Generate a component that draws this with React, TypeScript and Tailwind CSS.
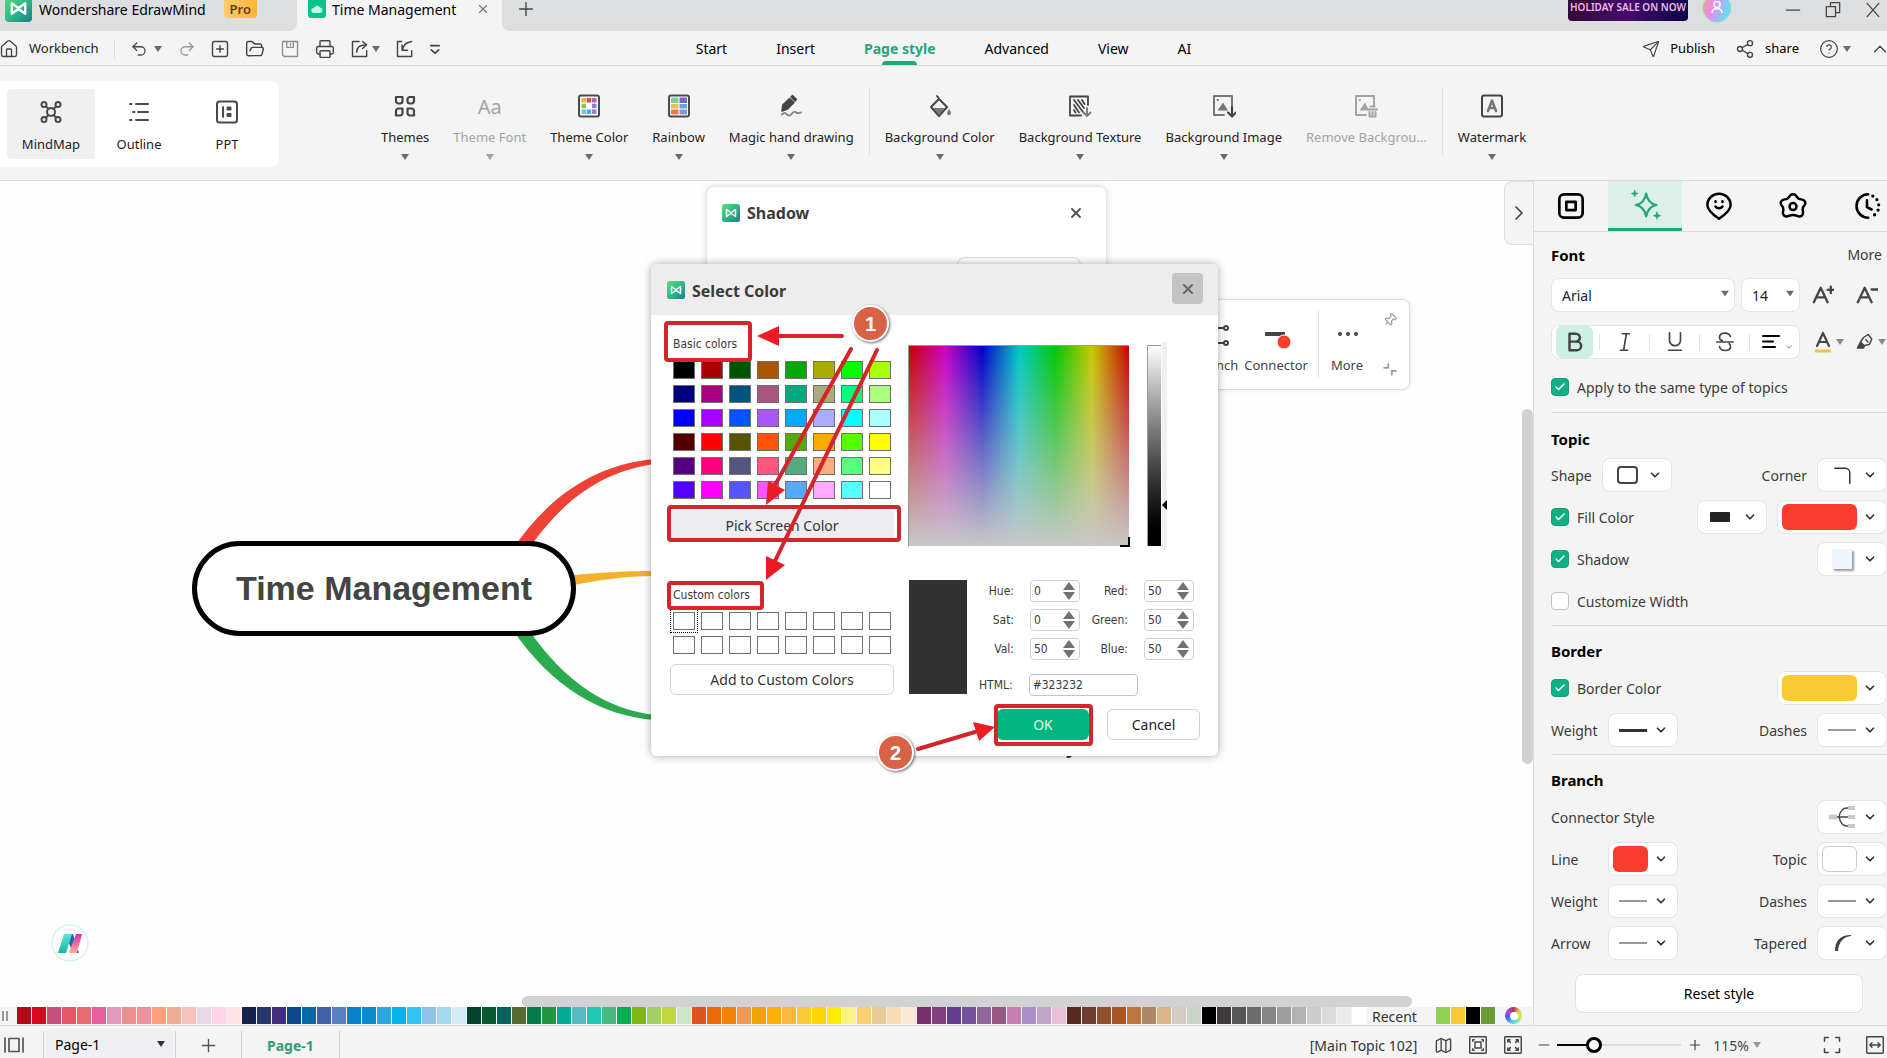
import React from "react";
import {
  House, Undo2, Redo2, SquarePlus, FolderOpen, Printer, Send, Share2, CircleHelp,
  ChevronUp, ChevronRight, ChevronDown, Plus, Minus, X, Check, Pin, Map as MapIcon,
} from "lucide-react";

type IconProps = { className?: string; box?: string; sw?: number; children: React.ReactNode };

function Icon({ className = "size-6", box = "0 0 24 24", sw = 2, children }: IconProps) {
  return (
    <svg viewBox={box} className={"shrink-0 " + className} fill="none" stroke="currentColor" strokeWidth={sw} strokeLinecap="round" strokeLinejoin="round" aria-hidden="true">
      {children}
    </svg>
  );
}

function Caret({ className = "text-[#6b6b6b]" }: { className?: string }) {
  return (
    <svg viewBox="0 0 8 6" className={"h-1.5 w-2 shrink-0 " + className} fill="currentColor" aria-hidden="true">
      <path d="M0 0h8L4 6z" />
    </svg>
  );
}

function Logo({ className }: { className: string }) {
  return (
    <svg viewBox="0 0 18 18" className={"shrink-0 " + className} aria-hidden="true">
      <defs>
        <linearGradient id="lg" x1="0" y1="0" x2="1" y2="1">
          <stop offset="0" stopColor="#5fdc7c" />
          <stop offset="0.5" stopColor="#2fb986" />
          <stop offset="1" stopColor="#1b7f8c" />
        </linearGradient>
      </defs>
      <rect width="18" height="18" rx="2.500" fill="url(#lg)" />
      <path d="M4.500 12.500v-7L8 8l1 .8L10 8l3.500-2.500v7L10 10l-1-.8-1 .8z" fill="none" stroke="#fff" strokeWidth="1.500" strokeLinejoin="round" />
    </svg>
  );
}

/* ---------- Title bar ---------- */

function TitleBar() {
  return (
    <header className="flex h-[31px] shrink-0 overflow-hidden bg-[#dcdee0] text-[15px] text-black">
      <div className="flex w-[297px] bg-[#f4f4f4]">
        <div className="flex h-[31px] w-full items-start rounded-br-lg bg-[#dcdee0] pl-[5px]">
          <Logo className="-mt-[5px] size-[27px]" />
          <span className="ml-[7px] text-[14px] leading-[19px]">Wondershare EdrawMind</span>
          <span className="ml-auto mr-10 h-[18px] rounded-b bg-gradient-to-r from-[#fccb6c] to-[#fbb533] px-1.5 text-[13px] font-semibold leading-[18px] text-[#6b3a10]">Pro</span>
        </div>
      </div>
      <div className="flex h-[31px] w-[205px] items-start bg-[#f4f4f4] pl-[11px]">
        <svg viewBox="0 0 18 18" className="h-[18px] w-[18px]" aria-hidden="true">
          <path d="M0 0h18v15a3 3 0 0 1-3 3H3a3 3 0 0 1-3-3z" fill="#08c389" />
          <path d="M6 13a2.500 2.500 0 0 1-.3-5A3.500 3.500 0 0 1 12 7.500 2.800 2.800 0 0 1 12.500 13z" fill="#c7f5e5" />
        </svg>
        <span className="ml-1.5 text-[14px] leading-[19px]">Time Management</span>
        <button aria-label="Close tab" className="ml-auto mr-3 mt-0.5 text-[#777]"><X className="size-3.5" strokeWidth={2} /></button>
      </div>
      <div className="flex flex-1 bg-[#f4f4f4]">
        <div className="flex flex-1 items-start rounded-bl-lg bg-[#dcdee0] pl-[13px]">
          <button aria-label="New tab" className="-mt-0.5 text-[#444]"><Plus className="size-[22px]" strokeWidth={1.5} /></button>
          <div className="ml-auto flex items-start">
            <div className="h-[21px] w-[120px] rounded-b bg-gradient-to-r from-[#330838] via-[#440a6c] to-[#0a0348] text-center text-[10px] font-semibold leading-[15px] text-[#f2b8e4]">HOLIDAY SALE ON NOW</div>
            <svg viewBox="0 0 30 30" className="-mt-[7px] ml-3.5 size-[30px]" aria-hidden="true">
              <defs>
                <linearGradient id="av" x1="0" y1="0" x2="1" y2="0.3">
                  <stop offset="0" stopColor="#f6a77c" /><stop offset="0.45" stopColor="#e78bf2" /><stop offset="1" stopColor="#63e0f4" />
                </linearGradient>
              </defs>
              <circle cx="15" cy="15" r="14" fill="url(#av)" stroke="#8fdcc0" />
              <circle cx="15" cy="11.500" r="3" fill="none" stroke="#fff" strokeWidth="1.500" />
              <path d="M10 20c0-6 10-6 10 0" fill="none" stroke="#fff" strokeWidth="1.500" />
            </svg>
            <div className="ml-[51px] mr-1 flex gap-5 text-[#444]">
              <button aria-label="Minimize"><Icon className="size-5" sw={1.500}><path d="M4 12h16" /></Icon></button>
              <button aria-label="Restore"><Icon className="size-5" sw={1.500}><path d="M4 8h11v12H4zM9 8V3h11v12h-5" /></Icon></button>
              <button aria-label="Close"><Icon className="size-5" sw={1.500}><path d="M5 4l14 16M19 4L5 20" /></Icon></button>
            </div>
          </div>
        </div>
      </div>
    </header>
  );
}

/* ---------- Quick access bar ---------- */

const MENU = ["Start", "Insert", "Page style", "Advanced", "View", "AI"];

function MenuBar() {
  return (
    <div className="flex h-[35px] shrink-0 items-stretch border-b border-[#dadbdc] text-[13px] text-[#222]">
      <div className="flex flex-1 items-center pt-px text-[#444]">
        <button className="-ml-px flex items-center gap-2.5 text-[#222]"><House className="size-5 text-[#444]" strokeWidth={1.6} />Workbench</button>
        <span className="ml-[15px] mr-[15px] h-5 w-px bg-[#ddd]" />
        <button aria-label="Undo" className="flex items-center gap-1.5"><Undo2 className="size-[18px]" strokeWidth={1.700} /><Caret /></button>
        <button aria-label="Redo" className="ml-4 text-[#999]"><Redo2 className="size-[18px]" strokeWidth={1.700} /></button>
        <button aria-label="New" className="ml-3.5"><SquarePlus className="size-5" strokeWidth={1.700} /></button>
        <button aria-label="Open" className="ml-[15px]"><FolderOpen className="size-5" strokeWidth={1.700} /></button>
        <button aria-label="Save" className="ml-[15px] text-[#8d8d8d]">
          <Icon className="size-5" sw={1.600}><path d="M3 3h18v18H5l-2-2zM8 3v7h8V3M12.500 5.500v2" /></Icon>
        </button>
        <button aria-label="Print" className="ml-[15px]"><Printer className="size-5" strokeWidth={1.700} /></button>
        <button aria-label="Export" className="ml-[15px] flex items-center gap-0.5">
          <Icon className="size-5" sw={1.700}><path d="M11 3H3v18h17v-7M8 16c0-6 3-9 11-9M15 3l5 4-5 4.500" /></Icon><Caret />
        </button>
        <button aria-label="Import" className="ml-[15px]">
          <Icon className="size-5" sw={1.700}><path d="M8 3H3v18h17v-7M20 3c-7 1-10 4-11 10M8.500 7v6.500H15" /></Icon>
        </button>
        <button aria-label="Customize" className="ml-2.5"><Icon className="size-5"><path d="M7 8h10M7.500 13l4.500 4 4.500-4" /></Icon></button>
      </div>
      <nav className="flex items-stretch gap-[49px] text-[14px] leading-[36px] text-black">
        {MENU.map((m) =>
          m === "Page style" ? (
            <a key={m} href="#page-style" className="flex flex-col items-center font-bold text-[#22a67c]">
              <span className="h-[30px]">{m}</span>
              <span className="h-1 w-[35px] rounded-t bg-[#22a67c]" />
            </a>
          ) : (
            <a key={m} href={"#" + m}>{m}</a>
          )
        )}
      </nav>
      <div className="flex flex-1 items-center justify-end overflow-hidden pt-px text-black">
        <button className="flex items-center gap-2.5"><Send className="size-[18px] text-[#444]" strokeWidth={1.5} />Publish</button>
        <button className="ml-5 flex items-center gap-2.5"><Share2 className="size-5 text-[#444]" strokeWidth={1.6} />share</button>
        <button aria-label="Help" className="ml-5 flex items-center gap-1 text-[#444]"><CircleHelp className="size-5" strokeWidth={1.4} /><Caret /></button>
        <button aria-label="Collapse ribbon" className="-mr-1 ml-[18px] text-[#444]"><ChevronUp className="size-[22px]" strokeWidth={1.5} /></button>
      </div>
    </div>
  );
}

/* ---------- Ribbon ---------- */

const IMG_FRAME = "M20 12V2H2v19h10M5.500 6h.5";

const icons = {
  mindmap: (
    <Icon sw={2}><circle cx="12" cy="12" r="4" /><circle cx="5" cy="4.500" r="2.500" /><circle cx="19" cy="4.500" r="2.500" /><circle cx="5" cy="19.500" r="2.500" /><circle cx="19" cy="19.500" r="2.500" /><path d="M7 6.500l2.500 2.500M17 6.500l-2.500 2.500M7 17.500l2.500-2.500M17 17.500l-2.500-2.500" /></Icon>
  ),
  outline: <Icon sw={2}><path d="M3 4h1.500M9 4h12M6 12h1.500M11 12h10M3 20h1.500M9 20h12" /></Icon>,
  ppt: <Icon sw={2}><rect x="2" y="1.500" width="20" height="21" rx="2.500" /><path d="M8 7v10M12.500 7.500h3v2h-3zM12.500 14h3v2h-3z" /></Icon>,
  themes: (
    <Icon sw={2.200}><path d="M3 3h6.500v4A2.500 2.500 0 0 1 7 9.500H5.500A2.500 2.500 0 0 1 3 7zM14.500 5.500A2.500 2.500 0 0 1 17 3h4v4a2.500 2.500 0 0 1-2.500 2.500H17A2.500 2.500 0 0 1 14.500 7zM3 17a2.500 2.500 0 0 1 2.500-2.500h4V19A2.500 2.500 0 0 1 7 21.500H3zM14.500 14.500h4A2.500 2.500 0 0 1 21 17v4.500h-4a2.500 2.500 0 0 1-2.500-2.500z" /></Icon>
  ),
  themeColor: (
    <svg viewBox="0 0 24 24" className="size-6"><rect x="2" y="1.500" width="20" height="21" rx="2" fill="#fff" stroke="#4a4a4a" strokeWidth="2" />
      <path d="M4.500 4h4.500v4.500H4.500z" fill="#e2b84a" /><path d="M9.700 4h4.500v4.500H9.700z" fill="#d4504c" /><path d="M15 4h4.500v4.500H15z" fill="#b964b8" />
      <path d="M4.500 9.700h4.500v4.500H4.500z" fill="#86c45c" /><path d="M15 9.700h4.500v4.500H15z" fill="#8c7fd4" />
      <path d="M4.500 15.400h4.500v4.500H4.500z" fill="#6ec6d0" /><path d="M9.700 15.400h4.500v4.500H9.700z" fill="#5ba8e0" /><path d="M15 15.400h4.500v4.500H15z" fill="#8a86cc" />
    </svg>
  ),
  rainbow: (
    <svg viewBox="0 0 24 24" className="size-6"><rect x="2" y="1.500" width="20" height="21" rx="2" fill="#fff" stroke="#4a4a4a" strokeWidth="2" />
      <path d="M4 3.500h7.500V9H4z" fill="#7ccf9c" /><path d="M12.500 3.500H20V9h-7.500z" fill="#7f62c4" />
      <path d="M4 10h7.500v4.500H4z" fill="#e9c050" /><path d="M12.500 10H20v4.500h-7.500z" fill="#66a9d8" />
      <path d="M4 15.500h7.500v5H4z" fill="#ea7a50" /><path d="M12.500 15.500H20v5h-7.500z" fill="#8a96da" />
    </svg>
  ),
  magic: (
    <Icon sw={1.500}>
      <path d="M3 17l.8-6L10.500 4.500l4.500 4L8.500 15z" fill="currentColor" /><path d="M12 3l1.500-1.500 4 4L16 7z" fill="currentColor" />
      <path d="M3 20.500c2-2 3.500-2 5 0s3.500 1 5-1 3-2 4-1 2 .5 5 0" stroke="#888" strokeWidth="2" />
    </Icon>
  ),
  bucket: (
    <Icon><path d="M11 5l8 8-8 9-8-9zM9 2l3 4" /><path d="M5 14h12l-6 7z" fill="#777" stroke="none" /><path d="M21 15c3 4 2 6 0 6s-3-2 0-6z" fill="#777" stroke="none" /></Icon>
  ),
  texture: (
    <Icon sw={1.800}><path d="M20 11V2.500H2v19h11" /><path d="M6 6l9 12M10 6l6 8M14 6l2.500 4M6 11l5 7.500M6 16l1.500 2.500" /><path d="M19 14v8M15.500 18.500L19 22l3.500-3.500" stroke="#777" /></Icon>
  ),
  image: (
    <Icon><path d={IMG_FRAME} stroke="#777" /><path d="M5.500 16.500l5.500-8 5 8z" fill="#777" stroke="none" /><path d="M20 13v9M16 18.500l4 4 4-4" strokeWidth="2.200" /></Icon>
  ),
  remove: (
    <Icon><path d={IMG_FRAME} /><path d="M5.500 16.500l5.500-8 4 8z" fill="currentColor" stroke="none" /><path d="M14 15.500h9M16.500 12.500h4M15.500 18v4.500h6V18M18.500 18v4" /></Icon>
  ),
  watermark: <Icon><rect x="2" y="1.500" width="20" height="21" rx="2" /><path d="M8 17l4-10.500L16 17M9.500 14h5" stroke="#777" strokeWidth="2.500" /></Icon>,
};

type Tool = { label: string; icon: React.ReactNode; off?: boolean; caret?: boolean; sep?: boolean };

const TOOLS: Tool[] = [
  { label: "Themes", icon: icons.themes, caret: true },
  { label: "Theme Font", icon: <span className="block h-6 text-[20px] leading-[26px]">Aa</span>, off: true, caret: true },
  { label: "Theme Color", icon: icons.themeColor, caret: true },
  { label: "Rainbow", icon: icons.rainbow, caret: true },
  { label: "Magic hand drawing", icon: icons.magic, caret: true, sep: true },
  { label: "Background Color", icon: icons.bucket, caret: true },
  { label: "Background Texture", icon: icons.texture, caret: true },
  { label: "Background Image", icon: icons.image, caret: true },
  { label: "Remove Backgrou...", icon: icons.remove, off: true, sep: true },
  { label: "Watermark", icon: icons.watermark, caret: true },
];

function Ribbon() {
  const views = [
    { label: "MindMap", icon: icons.mindmap },
    { label: "Outline", icon: icons.outline },
    { label: "PPT", icon: icons.ppt },
  ];
  return (
    <div className="flex h-[115px] shrink-0 items-start border-b border-[#dadbdc] pt-[15px] text-[13px] text-[#222]">
      <div className="flex w-[279px] shrink-0 rounded-r-lg bg-white py-2 pl-[7px]">
        {views.map((v, i) => (
          <button key={v.label} className={"flex h-[70px] w-[88px] flex-col items-center rounded pt-[11px] " + (i === 0 ? "bg-[#f0f0f0]" : "")}>
            <span className="text-[#4a4a4a]">{v.icon}</span>
            <span className="mt-2.5 leading-5">{v.label}</span>
          </button>
        ))}
      </div>
      <div className="ml-[90px] flex">
        {TOOLS.map((t) => (
          <React.Fragment key={t.label}>
            <button disabled={t.off} className={"flex h-20 flex-col items-center whitespace-nowrap px-3 pt-[13px] " + (t.off ? "text-[#a3a3a3]" : "")}>
              <span className={t.off ? "" : "text-[#444]"}>{t.icon}</span>
              <span className="mt-[9px] leading-5">{t.label}</span>
              {t.caret && <span className="mt-[7px]"><Caret className={t.off ? "text-[#a3a3a3]" : "text-[#6b6b6b]"} /></span>}
            </button>
            {t.sep && <span className="mx-[3px] mt-2 h-[66px] w-px bg-[#dedede]" />}
          </React.Fragment>
        ))}
      </div>
    </div>
  );
}

/* ---------- Colour dialog ---------- */

const BASIC = [
  "#000000", "#aa0000", "#005500", "#aa5500", "#00aa00", "#aaaa00", "#00ff00", "#aaff00",
  "#00007f", "#aa007f", "#00557f", "#aa557f", "#00aa7f", "#aaaa7f", "#00ff7f", "#aaff7f",
  "#0000ff", "#aa00ff", "#0055ff", "#aa55ff", "#00aaff", "#aaaaff", "#00ffff", "#aaffff",
  "#550000", "#ff0000", "#555500", "#ff5500", "#55aa00", "#ffaa00", "#55ff00", "#ffff00",
  "#55007f", "#ff007f", "#55557f", "#ff557f", "#55aa7f", "#ffaa7f", "#55ff7f", "#ffff7f",
  "#5500ff", "#ff00ff", "#5555ff", "#ff55ff", "#55aaff", "#ffaaff", "#55ffff", "#ffffff",
];

function Spin({ label, value }: { label: string; value: number }) {
  return (
    <label className="flex h-[22px] items-center justify-end gap-4">
      {label}:
      <span className="flex h-[22px] w-[50px] items-center rounded border border-[#d0d0d0] bg-white pl-[3px] pr-1">
        <input type="number" defaultValue={value} className="w-0 min-w-0 flex-1 bg-transparent outline-none [appearance:textfield] [&::-webkit-inner-spin-button]:appearance-none" />
        <svg viewBox="0 0 12 18" className="h-[18px] w-3" fill="#717171" aria-hidden="true"><path d="M6 0l6 8H0zM6 18l6-8H0z" /></svg>
      </span>
    </label>
  );
}

function SelectColorDialog() {
  return (
    <section aria-label="Select Color" className="absolute left-[651px] top-[83px] w-[567px] overflow-hidden rounded-md bg-white text-[#3a3a3a] shadow-[0_0_8px_rgba(0,0,0,0.35)]">
      <div className="flex h-[51px] items-center bg-[#ededed] pl-4 pr-[15px]">
        <Logo className="size-[18px]" />
        <h2 className="ml-[7px] pt-0.5 text-[16px] font-bold">Select Color</h2>
        <button aria-label="Close" className="mb-[11px] ml-auto grid h-[31px] w-[31px] place-items-center self-end rounded-sm bg-[#c4c4c4] text-[#666]"><X className="size-4" strokeWidth={3} /></button>
      </div>
      <div className="flex gap-3.5 pl-[19px]">
        <div className="w-[224px] pt-[19px]">
          <h3 className="px-[3px] font-['DejaVu_Sans_Condensed','DejaVu_Sans',sans-serif] text-[12px] leading-5">Basic colors</h3>
          <div className="mt-[7px] grid grid-cols-[repeat(8,22px)] gap-1.5 px-[3px]">
            {BASIC.map((c) => (
              <button key={c} aria-label={c} className="h-[18px] border border-[#707070]" style={{ backgroundColor: c }} />
            ))}
          </div>
          <button className="mt-[11px] h-[31px] w-full rounded bg-[#edecf1] text-[14px] text-[#333]">Pick Screen Color</button>
          <h3 className="mt-11 px-[3px] font-['DejaVu_Sans_Condensed','DejaVu_Sans',sans-serif] text-[12px] leading-5">Custom colors</h3>
          <div className="mt-[7px] grid grid-cols-[repeat(8,22px)] gap-1.5 px-[3px]">
            {Array.from({ length: 16 }, (_, i) => (
              <button key={i} aria-label={"Custom color " + (i + 1)} className={"h-[18px] border border-[#707070] bg-white " + (i === 0 ? "outline-1 outline-offset-2 outline-dotted outline-black" : "")} />
            ))}
          </div>
          <button className="mt-2.5 h-[31px] w-full rounded-md border border-[#d4d4d4] bg-white text-[14px] text-[#333]">Add to Custom Colors</button>
        </div>
        <div className="pt-[30px]">
          <div className="flex">
            <div className="relative h-[201px] w-[221px] border-l border-t border-[#999] bg-[linear-gradient(to_bottom,rgba(200,200,200,0),#c8c8c8),linear-gradient(to_right,#c80000,#c800c8,#0000c8,#00c8c8,#00c800,#c8c800,#c80000)]">
              <span className="absolute -bottom-px -right-px h-2.5 w-2.5 border-b-2 border-r-2 border-black" />
            </div>
            <div className="ml-[18px] h-[201px] w-3.5 border-l border-t border-[#999] bg-gradient-to-b from-white to-black" />
            <div className="-mb-1 -mt-[3px] ml-px flex w-[5px] items-start bg-[#f0f0f0]">
              <svg viewBox="0 0 5 10" className="mt-[158px] h-2.5 w-[5px]" aria-hidden="true"><path d="M5 0v10L0 5z" /></svg>
            </div>
          </div>
          <div className="mt-[34px] flex font-['DejaVu_Sans_Condensed','DejaVu_Sans',sans-serif] text-[12px]">
            <div className="ml-px h-[114px] w-[58px] bg-[#323232]" />
            <div className="w-[227px]">
              <div className="grid grid-cols-[113px_114px] gap-y-[7px]">
                <Spin label="Hue" value={0} /><Spin label="Red" value={50} />
                <Spin label="Sat" value={0} /><Spin label="Green" value={50} />
                <Spin label="Val" value={50} /><Spin label="Blue" value={50} />
              </div>
              <label className="mt-3.5 flex items-center gap-4 pl-3">
                HTML:
                <input defaultValue="#323232" className="h-[22px] w-[109px] rounded border border-[#c4c4c4] bg-white px-[3px] outline-none" />
              </label>
            </div>
          </div>
          <div className="mb-4 mt-[13px] flex justify-end gap-[18px] text-[14px]">
            <button className="h-[31px] w-[92px] rounded-md bg-[#02b67f] text-[#d8fbef]">OK</button>
            <button className="-mr-1.5 h-[31px] w-[93px] rounded-md border border-[#d0d0d0] bg-white text-[#222]">Cancel</button>
          </div>
        </div>
      </div>
    </section>
  );
}

/* ---------- Canvas ---------- */

function Canvas() {
  return (
    <main className="relative min-h-0 flex-1 overflow-hidden bg-[#fefefe]">
      <svg className="absolute left-0 top-0 h-full w-full" aria-hidden="true">
        <path d="M512 369C552 310 600 283 655 278L655 283C606 290 566 314 528 369z" fill="#ee4236" />
        <path d="M573 394C600 392 620 390 655 390L655 395C625 395 600 399 573 404z" fill="#f2b02c" />
        <path d="M512 448C552 506 600 535 655 539L655 534C606 528 566 502 528 448z" fill="#2bab4d" />
      </svg>
      <div className="absolute left-[192px] top-[360px] flex h-[95px] w-[384px] items-center justify-center rounded-full border-[5px] border-black bg-white font-['Liberation_Sans',Arial,sans-serif] text-[34px] font-bold text-[#444]">
        Time Management
      </div>
      <svg viewBox="0 0 38 38" className="absolute left-[51px] top-[743px] size-[38px]" aria-hidden="true">
        <defs>
          <linearGradient id="n1" x1="0" y1="0" x2="0" y2="1"><stop offset="0" stopColor="#5fe3dc" /><stop offset="1" stopColor="#17b89f" /></linearGradient>
          <linearGradient id="n2" x1="0" y1="0" x2="0" y2="1"><stop offset="0" stopColor="#e42bb0" /><stop offset="1" stopColor="#fbb08f" /></linearGradient>
        </defs>
        <circle cx="19" cy="19" r="18" fill="#fff" stroke="#d9f1ea" strokeWidth="1.500" />
        <path d="M19 10h3l6 19h-6l-5-12z" fill="#1d6fb0" />
        <path d="M13 10h8l-6 19H7z" fill="url(#n1)" />
        <path d="M25 10h6l-5 19h-8z" fill="url(#n2)" />
      </svg>
      <span className="absolute left-[1066px] top-[554px] text-[18px] font-bold leading-6 text-[#333]">y</span>

      <section aria-label="Shadow" className="absolute left-[706px] top-[5px] h-[200px] w-[401px] overflow-hidden rounded-lg border border-[#e6e6e6] bg-white shadow-[0_0_6px_rgba(0,0,0,0.15)]">
        <div className="flex items-center pl-[15px] pr-[22px] pt-4">
          <Logo className="size-[18px]" />
          <h2 className="ml-[7px] text-[16px] font-bold leading-5 text-[#3a3a3a]">Shadow</h2>
          <button aria-label="Close" className="ml-auto text-[#555]"><X className="size-4" strokeWidth={3} /></button>
        </div>
        <div className="ml-[250px] mt-[34px] h-8 w-[124px] rounded-lg border border-[#ddd]" />
      </section>

      <div className="absolute left-[1000px] top-[118px] flex h-[91px] w-[410px] justify-end rounded-lg border border-[#dedede] bg-white text-[13px] text-[#444] shadow-[0_0_4px_rgba(0,0,0,0.1)]">
        <button className="flex flex-col items-center pt-[19px]">
          <Icon className="size-8" box="0 0 32 32"><path d="M4 16h6M10 9h13M10 24h13M10 9v15" /><circle cx="25" cy="9" r="2" /><circle cx="25" cy="24" r="2" /></Icon>
          <span className="mt-1 leading-5">Branch</span>
        </button>
        <button className="ml-1.5 flex flex-col items-center pt-[19px]">
          <svg viewBox="0 0 32 32" className="size-8" aria-hidden="true"><path d="M5 13h20v4H5z" fill="#444" /><circle cx="24" cy="23" r="7" fill="#f8402f" stroke="#fff" /></svg>
          <span className="mt-1 leading-5">Connector</span>
        </button>
        <span className="ml-2.5 mr-3 mt-[11px] h-[66px] w-px bg-[#ddd]" />
        <button className="flex flex-col items-center pt-[19px]">
          <svg viewBox="0 0 32 32" className="size-8" fill="#444" aria-hidden="true"><circle cx="9" cy="15" r="2" /><circle cx="17" cy="15" r="2" /><circle cx="25" cy="15" r="2" /></svg>
          <span className="mt-1 leading-5">More</span>
        </button>
        <div className="ml-5 mr-3 flex flex-col justify-between py-[13px] text-[#999]">
          <button aria-label="Pin toolbar"><Pin className="size-3.5 rotate-45" strokeWidth={2} /></button>
          <button aria-label="Collapse toolbar"><Icon className="size-3.5" sw={3}><path d="M2 10h7V3M15 22v-7h7" /></Icon></button>
        </div>
      </div>

      <SelectColorDialog />

      <div className="absolute right-0 top-0 flex h-16 w-[29px] items-center justify-center rounded-l-lg border border-r-0 border-[#ddd] bg-[#f4f4f4] text-[#444]">
        <button aria-label="Collapse panel"><ChevronRight className="size-6" strokeWidth={1.7} /></button>
      </div>
      <div className="absolute right-0 top-[228px] h-[355px] w-[11px] rounded-md bg-[#d2d2d4]" />
      <div className="absolute bottom-0 left-[522px] right-[121px] h-[11px] rounded-md bg-[#d2d2d4]" />

      <Annotations />
    </main>
  );
}

function Step({ n, className }: { n: number; className: string }) {
  return (
    <span className={"absolute grid size-[37px] place-items-center rounded-full border-2 border-white bg-[#d86245] font-['Liberation_Sans',Arial,sans-serif] text-[20px] font-bold text-white shadow-[1px_1px_3px_rgba(0,0,0,0.6)] " + className}>
      {n}
    </span>
  );
}

function Annotations() {
  return (
    <div className="pointer-events-none absolute inset-0">
      <div className="absolute left-[664px] top-[140px] h-[41px] w-[88px] rounded-sm border-4 border-[#d4252b]" />
      <div className="absolute left-[667px] top-[324px] h-[37px] w-[234px] rounded-sm border-4 border-[#d4252b]" />
      <div className="absolute left-[667px] top-[400px] h-[29px] w-[97px] rounded-sm border-4 border-[#d4252b]" />
      <div className="absolute left-[994px] top-[523px] h-[42px] w-[99px] rounded-sm border-4 border-[#d4252b]" />
      <svg className="absolute left-0 top-0 h-full w-full" aria-hidden="true">
        <g stroke="#d4252b" strokeWidth="4" strokeLinecap="round">
          <path d="M842 155H775M851 168L775 304M877 169L774 382M918 568L975 551" />
        </g>
        <g fill="#ea1d25">
          <path d="M757 155L779 145V165zM766 324L768 300L785 309zM766 399L766 375L785 384zM995 546L973 541L979 560z" />
        </g>
      </svg>
      <Step n={1} className="left-[852px] top-[124px]" />
      <Step n={2} className="left-[877px] top-[553px]" />
    </div>
  );
}

/* ---------- Colour strip ---------- */

const STRIP = (
  "b00b17 d60a1e c8507c e85468 e96c70 e660a0 e09abc ed8f8c ee939b ff9f7c f0ac94 f6c0bc ead6e8 ffd4e4 ffe2e6 " +
  "12224c 26386e 42307a 0b488c 0668a4 4460a8 5682c0 0880cc 0a8ccc 2ea6e0 06b2ee 34c4f4 90c2ea a4d8ee d2ecf8 " +
  "05422e 065a30 04645c 566c30 087c48 209840 06ac98 54bcc0 1ccab2 48b880 06ae54 7eb810 a4d068 bed83e cee6c8 " +
  "de5420 ea6a06 f08206 f09a56 f0a404 ffae0a ffb83c f8ca34 ffd604 ffec06 fcf086 fad070 e8ca98 fadab0 fce8d0 " +
  "76306c 823e80 663e90 74529a 94669e 985884 c87cb0 a890cc c2a4c8 e8c0d8 " +
  "582a1e 723a2c 94502e aa5628 be783e b08464 dcb488 d2ccc4 c8d2c8 " +
  "000000 403a3c 585656 6e6c6c 868686 9e9e9e b2b2b2 cccccc dadadc ececec ffffff"
).split(" ");

const RECENT = ["#92d050", "#f8ca34", "#000000", "#6a9c38"];

function ColorStrip() {
  return (
    <div className="flex h-[18px] shrink-0 bg-[#f4f4f4]">
      <div className="ml-0.5 mr-[9px] mt-1 h-2.5 w-1.5 shrink-0 border-x-2 border-[#999]" />
      <div className="flex shrink-0 gap-px">
        {STRIP.map((c, i) => (
          <button key={i} aria-label={"Color " + c} className="h-[17px] w-3.5" style={{ backgroundColor: "#" + c }} />
        ))}
      </div>
      <span className="ml-1.5 text-[14px] leading-[19px] text-[#333]">Recent</span>
      <div className="ml-auto flex gap-px">
        {RECENT.map((c) => (
          <button key={c} aria-label={"Recent " + c} className="h-[17px] w-3.5" style={{ backgroundColor: c }} />
        ))}
      </div>
      <button aria-label="More colors" className="ml-2.5 mr-[11px] grid size-[17px] place-items-center rounded-full bg-[conic-gradient(#a8384a,#f4c542,#d8e860,#62e8c8,#46c4f0,#4a54e0,#b64ae0,#a8384a)]">
        <span className="size-2 rounded-full bg-white" />
      </button>
    </div>
  );
}

/* ---------- Style panel ---------- */

function Tick({ label, on = true }: { label: string; on?: boolean }) {
  return (
    <label className="flex h-[34px] items-center gap-2">
      <span className="relative size-[18px]">
        <input type="checkbox" defaultChecked={on} className="block size-[18px] appearance-none rounded-sm border border-[#c4c4c4] bg-white checked:border-[#1f9c76] checked:bg-[#0fb085]" />
        {on && <Check className="pointer-events-none absolute left-[3px] top-[3px] size-3 text-white" strokeWidth={3} />}
      </span>
      {label}
    </label>
  );
}

function Drop({ label, wide, children }: { label: string; wide?: boolean; children: React.ReactNode }) {
  return (
    <button aria-label={label} aria-haspopup="listbox" className={"flex h-[34px] items-center justify-between rounded-lg border border-[#e4e4e4] bg-white pl-1 pr-[9px] text-[#333] " + (wide ? "w-[110px]" : "w-[70px]")}>
      <span className="flex flex-1 items-center justify-center">{children}</span>
      <ChevronDown className="ml-1.5 size-3.5" strokeWidth={3} />
    </button>
  );
}

function Heading({ children }: { children: React.ReactNode }) {
  return <h3 className="text-[15px] font-bold leading-5 text-black">{children}</h3>;
}

function Row({ left, leftDrop, right, rightDrop }: { left: string; leftDrop?: React.ReactNode; right?: string; rightDrop?: React.ReactNode }) {
  return (
    <div className="flex h-[34px] items-center">
      <span className={left === "Shape" || !leftDrop ? "mr-2.5" : "w-[57px]"}>{left}</span>
      {leftDrop}
      <span className="ml-auto mr-2.5">{right}</span>
      {rightDrop}
    </div>
  );
}

const line = (cls: string) => <span className={"ml-1 w-7 " + cls} />;

function StylePanel() {
  const tabs = [
    <Icon key="a" className="size-7" sw={2.300}><rect x="2" y="2" width="20" height="20" rx="4" /><path d="M8 8.500h8v7H8z" /></Icon>,
    <Icon key="b" className="size-8" box="0 0 28 28" sw={2}><path d="M15 4c1 6 4 9 9 10-5 1-8 4-9 10-1-6-4-9-9-10 5-1 8-4 9-10z" /><path d="M5 1l.8 2.200L8 4l-2.200.8L5 7l-.8-2.200L2 4l2.200-.8zM24.500 20l.9 2.400 2.300.9-2.300.9-.9 2.300-.9-2.300-2.300-.9 2.300-.9z" fill="currentColor" strokeWidth="0.500" /></Icon>,
    <Icon key="c" className="size-7" sw={2.100}><path d="M12 23C6 19 2 15.500 2 11a10 9.500 0 0 1 20 0c0 4.500-4 8-10 12z" /><path d="M9 8v.5M15 8v.5M9 12.500c1.500 2 4.500 2 6 0" /></Icon>,
    <Icon key="d" className="size-7" sw={2.100}><circle cx="12" cy="12.500" r="3" /><path d="M8.500 4.500c1.500-3.500 5.500-3.500 7 0 1 1.500 2 1.800 3.700 1.800 3.500.6 4.500 3.500 2 6-1.200 1.500-1.200 2.500-.7 4.200.8 3.500-2 5.500-5 4-2-1-5-1-7 0-3 1.500-5.800-.5-5-4 .5-1.700.5-2.700-.7-4.200-2.500-2.500-1.500-5.400 2-6 1.700 0 2.700-.3 3.700-1.800z" /></Icon>,
    <Icon key="e" className="size-7" sw={2.200}><path d="M13 2a10 10 0 1 0 0 20M12 7v6l4 2" /><path d="M17 3.500h.01M20.500 6.500h.01M22 11h.01M21.500 15.500h.01M18.500 19.500h.01" strokeWidth="2.800" /></Icon>,
  ];
  const field = "h-[34px] appearance-none rounded-lg border border-[#e4e4e4] bg-white text-[14px] text-[#222] outline-none";
  return (
    <aside className="flex w-[354px] shrink-0 flex-col overflow-hidden border-l border-[#dcdcdc] bg-[#f4f4f4] text-[14px] text-[#3a3a3a]">
      <div className="flex h-[51px] shrink-0 border-b border-[#dcdcdc] text-black">
        {tabs.map((t, i) => (
          <button key={i} aria-label={"Panel tab " + (i + 1)} className={"grid w-[74px] shrink-0 place-items-center " + (i === 1 ? "border-b-[3px] border-[#22a67c] bg-[#dcf0ea] text-[#22a67c]" : "")}>{t}</button>
        ))}
      </div>
      <div className="flex flex-col pl-[17px]">
        <div className="mt-[13px] flex items-center justify-between pr-[5px]">
          <Heading>Font</Heading>
          <a href="#more" className="leading-5">More</a>
        </div>
        <div className="mt-[13px] flex items-center text-[#444]">
          <span className="relative">
            <select aria-label="Font family" className={field + " w-[184px] pl-2.5"}><option>Arial</option></select>
            <span className="pointer-events-none absolute right-1.5 top-1/2 -translate-y-1/2"><Caret className="-mt-[3px] block text-[#6b6b6b]" /></span>
          </span>
          <span className="relative ml-1.5">
            <select aria-label="Font size" className={field + " w-[59px] pl-2.5"}><option>14</option></select>
            <span className="pointer-events-none absolute right-1.5 top-1/2 -translate-y-1/2"><Caret className="-mt-[3px] block text-[#6b6b6b]" /></span>
          </span>
          <button aria-label="Increase font" className="ml-3"><Icon className="size-[22px]" sw={2.500}><path d="M2 20L9.500 4 17 20M5 14.500h9M17 6.500h7M20.500 3v7" /></Icon></button>
          <button aria-label="Decrease font" className="ml-[22px]"><Icon className="size-[22px]" sw={2.500}><path d="M2 20L9.500 4 17 20M5 14.500h9M17 6h7" /></Icon></button>
        </div>
        <div className="mt-[13px] flex items-center text-[#444]">
          <div className="flex h-[34px] w-[249px] items-center rounded-lg border border-[#e4e4e4] bg-white">
            <button aria-label="Bold" className="ml-1 grid h-8 w-[37px] place-items-center rounded-md bg-[#cdefe4]"><Icon className="size-[22px]" sw={2.700}><path d="M6 3h7a4.300 4.300 0 0 1 0 8.600H6zM6 11.600h8a4.700 4.700 0 0 1 0 9.400H6z" /></Icon></button>
            <span className="ml-1.5 h-4 w-px bg-[#e0e0e0]" />
            <button aria-label="Italic" className="grid w-[49px] place-items-center"><Icon className="size-[22px]" sw={1.800}><path d="M9 3h8M7 21h8M13.500 3l-3 18" /></Icon></button>
            <span className="h-4 w-px bg-[#e0e0e0]" />
            <button aria-label="Underline" className="grid w-[49px] place-items-center"><Icon className="size-[22px]" sw={1.800}><path d="M6 2v8a6 6 0 0 0 12 0V2M5 21h14" /></Icon></button>
            <span className="h-4 w-px bg-[#e0e0e0]" />
            <button aria-label="Strikethrough" className="grid w-[49px] place-items-center"><Icon className="size-[22px]" sw={1.800}><path d="M18 6c-2-5-12-5-12 1 0 2 1.500 3 3 3.500M3 12h18M6 17c1.500 6 12 5.500 12 0 0-1.500-.5-2.500-1.500-3.200" /></Icon></button>
            <span className="h-4 w-px bg-[#e0e0e0]" />
            <button aria-label="Align" className="ml-3 flex items-end text-black"><Icon className="size-5" box="0 0 20 20"><path d="M1 4h16M1 9.500h10M1 15h12" /></Icon><ChevronDown className="ml-0.5 size-2.5 text-[#999]" strokeWidth={2.500} /></button>
          </div>
          <button aria-label="Font color" className="ml-3.5 flex items-center gap-1">
            <Icon className="h-[22px] w-[18px]" box="0 0 18 22" sw={2.200}><path d="M3 15L9 2l6 13M5 11h8" /><path d="M1 20h16" stroke="#ecc646" strokeWidth="3" strokeLinecap="butt" /></Icon>
            <Caret className="text-[#888]" />
          </button>
          <button aria-label="Highlight" className="ml-3 flex items-center gap-1">
            <Icon className="size-[18px]" sw={2}><path d="M10 6l6-4 5 6-3 7-7 2-5-5z" /><path d="M6 12l-4 8h8l1-3" fill="currentColor" /><path d="M13 9l3 3" /></Icon>
            <Caret className="text-[#888]" />
          </button>
        </div>
        <div className="mt-[11px]"><Tick label="Apply to the same type of topics" /></div>
        <hr className="mt-2 border-[#dcdcdc]" />

        <div className="mt-4"><Heading>Topic</Heading></div>
        <div className="mt-[9px] flex flex-col gap-2">
          <Row left="Shape" leftDrop={<Drop label="Shape"><span className="ml-1.5 h-[18px] w-[21px] rounded border-2 border-[#444]" /></Drop>}
            right="Corner" rightDrop={<Drop label="Corner"><Icon className="ml-1.5 size-[18px]"><path d="M1 3h14a6 6 0 0 1 6 6v14" /></Icon></Drop>} />
          <div className="flex items-center">
            <Tick label="Fill Color" />
            <span className="ml-auto mr-2.5"><Drop label="Fill style"><span className="h-2.5 w-5 rounded-[1px] bg-[#222]" /></Drop></span>
            <Drop label="Fill color" wide><span className="h-[26px] w-full rounded-md bg-[#f83c2e]" /></Drop>
          </div>
          <div className="flex items-center justify-between">
            <Tick label="Shadow" />
            <Drop label="Shadow style"><span className="ml-1 size-5 bg-[#eef5fc] shadow-[2px_2px_2px_rgba(0,0,0,0.4)]" /></Drop>
          </div>
          <Tick label="Customize Width" on={false} />
        </div>
        <hr className="mt-[7px] border-[#dcdcdc]" />

        <div className="mt-[15px]"><Heading>Border</Heading></div>
        <div className="mt-2.5 flex flex-col gap-2">
          <div className="flex items-center justify-between">
            <Tick label="Border Color" />
            <Drop label="Border color" wide><span className="h-[26px] w-full rounded-md bg-[#f8ca34]" /></Drop>
          </div>
          <Row left="Weight" leftDrop={<Drop label="Border weight">{line("h-[3px] bg-[#333]")}</Drop>}
            right="Dashes" rightDrop={<Drop label="Border dashes">{line("h-0.5 bg-[#999]")}</Drop>} />
        </div>
        <hr className="mt-[7px] border-[#dcdcdc]" />

        <div className="mt-[15px]"><Heading>Branch</Heading></div>
        <div className="mt-2.5 flex flex-col gap-2">
          <Row left="Connector Style" rightDrop={
            <Drop label="Connector style">
              <svg viewBox="0 0 26 24" className="ml-1 h-6 w-[26px]" aria-hidden="true">
                <path d="M0 9.500h8v5H0zM19 1h7v4h-7zM19 10h7v4h-7zM19 19h7v4h-7z" fill="#c9c9c9" />
                <path d="M8 12h11M19 3h-1c-5 0-7 4-8 9 1 5 3 9 8 9h1" fill="none" stroke="#444" strokeWidth="1.300" />
              </svg>
            </Drop>} />
          <Row left="Line" leftDrop={<Drop label="Line color"><span className="h-[26px] w-full rounded-md bg-[#f83c2e]" /></Drop>}
            right="Topic" rightDrop={<Drop label="Topic color"><span className="h-[26px] w-full rounded-md border border-[#ccc] bg-white" /></Drop>} />
          <Row left="Weight" leftDrop={<Drop label="Branch weight">{line("h-0.5 bg-[#999]")}</Drop>}
            right="Dashes" rightDrop={<Drop label="Branch dashes">{line("h-0.5 bg-[#999]")}</Drop>} />
          <Row left="Arrow" leftDrop={<Drop label="Arrow">{line("h-0.5 bg-[#999]")}</Drop>}
            right="Tapered" rightDrop={<Drop label="Tapered"><svg viewBox="0 0 18 18" className="ml-1.5 size-[18px]" aria-hidden="true"><path d="M1 17C1 7 6 1 17 1v1C9 3 5 8 4 17z" fill="#444" /></svg></Drop>} />
        </div>
        <button className="mb-3 ml-6 mr-6 mt-3.5 h-[39px] rounded-lg border border-[#e2e2e2] bg-white text-black">Reset style</button>
      </div>
    </aside>
  );
}

/* ---------- Status bar ---------- */

function StatusBar() {
  const corners = "M2 7V2h5M17 2h5v5M22 17v5h-5M7 22H2v-5";
  return (
    <footer className="flex h-[33px] shrink-0 items-center border-t border-[#dcdcdc] pt-0.5 text-[14px] text-[#333]">
      <button aria-label="Page panel" className="ml-1 mt-1 text-[#555]"><Icon className="size-5" box="0 0 20 20" sw={1.700}><path d="M1 3v14M19 3v14M5 3.500h10v13H5z" /></Icon></button>
      <span className="ml-[19px] mt-1 h-7 w-px bg-[#d0d0d0]" />
      <span className="relative ml-0.5">
        <select aria-label="Page" className="mt-0.5 h-[30px] w-[127px] appearance-none rounded bg-[#f0f0f4] pl-[9px] text-black outline-none"><option>Page-1</option></select>
        <span className="pointer-events-none absolute right-2 top-1/2"><Caret className="-mt-0.5 block" /></span>
      </span>
      <span className="ml-0.5 mt-1 h-7 w-px bg-[#d0d0d0]" />
      <button aria-label="Add page" className="ml-[22px] mt-1 text-[#555]"><Plus className="size-[21px]" strokeWidth={1.600} /></button>
      <span className="ml-[22px] mt-1 h-7 w-px bg-[#d0d0d0]" />
      <a href="#page-1" className="mx-[25px] mt-1 font-bold text-[#2f9e74]">Page-1</a>
      <span className="mt-1 h-7 w-px bg-[#d0d0d0]" />
      <div className="ml-auto mr-[3px] mt-1 flex items-center text-[#444]">
        <span className="text-[#333]">[Main Topic 102]</span>
        <button aria-label="Map view" className="ml-[17px]"><MapIcon className="size-[19px]" strokeWidth={1.700} /></button>
        <button aria-label="Fit selection" className="ml-4"><Icon className="size-[18px]" sw={1.900}><rect x="1" y="1" width="22" height="22" rx="1" /><path d="M8 8h8v8H8zM5 7V5h2M17 5h2v2M19 17v2h-2M7 19H5v-2" /></Icon></button>
        <button aria-label="Fit page" className="ml-[17px]"><Icon className="size-[18px]" sw={1.900}><rect x="1" y="1" width="22" height="22" rx="1" /><path d="M5 8V5h3M5 5l3.500 3.500M16 5h3v3M19 5l-3.500 3.500M19 16v3h-3M19 19l-3.500-3.500M8 19H5v-3M5 19l3.500-3.500" /></Icon></button>
        <button aria-label="Zoom out" className="ml-3.5"><Minus className="size-4" strokeWidth={1.800} /></button>
        <input type="range" aria-label="Zoom" defaultValue={27} className="ml-[5px] h-0.5 w-[124px] appearance-none bg-[linear-gradient(to_right,#000_30%,#dcdcdc_30%)] [&::-webkit-slider-thumb]:size-4 [&::-webkit-slider-thumb]:appearance-none [&::-webkit-slider-thumb]:rounded-full [&::-webkit-slider-thumb]:border-[3px] [&::-webkit-slider-thumb]:border-black [&::-webkit-slider-thumb]:bg-white" />
        <button aria-label="Zoom in" className="ml-1.5"><Plus className="size-4" strokeWidth={1.800} /></button>
        <button className="ml-2.5 flex items-center gap-1">115%<Caret className="text-[#999]" /></button>
        <button aria-label="Full screen" className="ml-[62px]"><Icon className="size-[18px]" sw={2}><path d={corners} /></Icon></button>
        <button aria-label="Fit width" className="ml-[25px]"><Icon className="size-[18px]" sw={1.900}><rect x="1" y="1" width="22" height="22" rx="1" /><path d="M5 12h14M8 9l-3 3 3 3M16 9l3 3-3 3" /></Icon></button>
      </div>
    </footer>
  );
}

export default function App() {
  return (
    <div className="flex h-screen flex-col overflow-hidden bg-[#f4f4f4] font-['Noto_Sans','Open_Sans',sans-serif]">
      <TitleBar />
      <MenuBar />
      <Ribbon />
      <div className="flex min-h-0 flex-1">
        <div className="flex min-w-0 flex-1 flex-col">
          <Canvas />
          <ColorStrip />
        </div>
        <StylePanel />
      </div>
      <StatusBar />
    </div>
  );
}
